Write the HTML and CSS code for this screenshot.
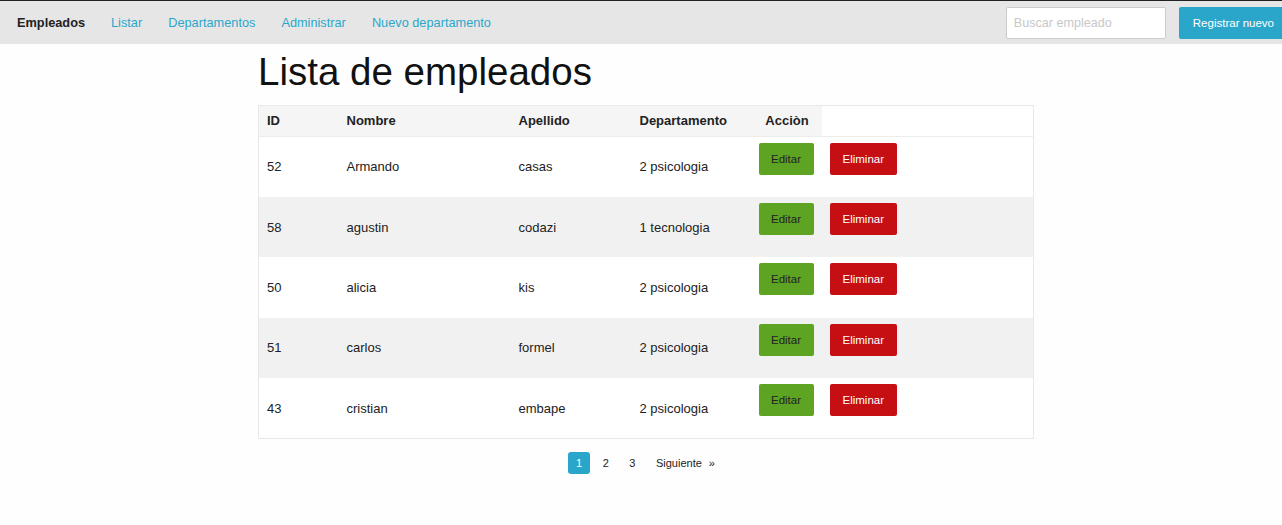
FILE: index.html
```html
<!DOCTYPE html>
<html lang="es">
<head>
<meta charset="utf-8">
<title>Lista de empleados</title>
<link rel="stylesheet" href="styles.css">
</head>
<body>
<nav class="topbar">
  <div class="nav-left">
    <a class="brand" href="#">Empleados</a>
    <a class="nav-link" href="#">Listar</a>
    <a class="nav-link" href="#">Departamentos</a>
    <a class="nav-link" href="#">Administrar</a>
    <a class="nav-link" href="#">Nuevo departamento</a>
  </div>
  <div class="nav-right">
    <input class="search" type="text" placeholder="Buscar empleado">
    <a class="btn-register" href="#">Registrar nuevo</a>
  </div>
</nav>
<main class="content">
  <h1 class="title">Lista de empleados</h1>
  <table class="emp-table">
    <colgroup>
      <col class="c-id"><col class="c-nombre"><col class="c-apellido"><col class="c-depto"><col class="c-accion"><col class="c-extra">
    </colgroup>
    <thead>
      <tr>
        <th>ID</th><th>Nombre</th><th>Apellido</th><th>Departamento</th><th class="th-center">Acciòn</th><td class="th-empty"></td>
      </tr>
    </thead>
    <tbody>
      <tr>
        <td>52</td><td>Armando</td><td>casas</td><td>2 psicologia</td>
        <td class="act"><a class="btn btn-edit" href="#">Editar</a></td>
        <td class="act"><a class="btn btn-del" href="#">Eliminar</a></td>
      </tr>
      <tr class="alt">
        <td>58</td><td>agustin</td><td>codazi</td><td>1 tecnologia</td>
        <td class="act"><a class="btn btn-edit" href="#">Editar</a></td>
        <td class="act"><a class="btn btn-del" href="#">Eliminar</a></td>
      </tr>
      <tr>
        <td>50</td><td>alicia</td><td>kis</td><td>2 psicologia</td>
        <td class="act"><a class="btn btn-edit" href="#">Editar</a></td>
        <td class="act"><a class="btn btn-del" href="#">Eliminar</a></td>
      </tr>
      <tr class="alt">
        <td>51</td><td>carlos</td><td>formel</td><td>2 psicologia</td>
        <td class="act"><a class="btn btn-edit" href="#">Editar</a></td>
        <td class="act"><a class="btn btn-del" href="#">Eliminar</a></td>
      </tr>
      <tr>
        <td>43</td><td>cristian</td><td>embape</td><td>2 psicologia</td>
        <td class="act"><a class="btn btn-edit" href="#">Editar</a></td>
        <td class="act"><a class="btn btn-del" href="#">Eliminar</a></td>
      </tr>
    </tbody>
  </table>
</main>
<ul class="pagination">
  <li><a class="page current" href="#">1</a></li>
  <li><a class="page" href="#">2</a></li>
  <li><a class="page" href="#">3</a></li>
  <li><a class="page" href="#">Siguiente<span class="raquo">»</span></a></li>
</ul>
</body>
</html>
```
FILE: styles.css
```css
html, body {
  margin: 0;
  padding: 0;
  background: #fefefe;
  overflow-x: hidden;
}
body {
  font-family: "Liberation Sans", Arial, sans-serif;
  color: #222;
  font-size: 13px;
}
a { text-decoration: none; }

.topbar {
  display: flex;
  align-items: center;
  justify-content: space-between;
  height: 43px;
  border-top: 1px solid #222;
  background: #e6e6e6;
  overflow: hidden;
}
.nav-left {
  display: flex;
  align-items: center;
  gap: 26px;
  padding-left: 17px;
}
.brand {
  font-weight: bold;
  color: #222;
  font-size: 12.75px;
}
.nav-link {
  color: #2ba6cb;
  font-size: 12.75px;
}
.nav-right {
  display: flex;
  align-items: center;
  gap: 13px;
  margin-right: -6px;
}
.search {
  box-sizing: border-box;
  width: 160px;
  height: 32px;
  border: 1px solid #cccccc;
  border-radius: 2px;
  background: #fff;
  padding: 0 7px;
  font-family: "Liberation Sans", Arial, sans-serif;
  font-size: 12.6px;
  color: #222;
  outline: none;
}
.search::placeholder { color: #c8c8c8; }
.btn-register {
  display: flex;
  align-items: center;
  height: 32px;
  padding: 0 14px;
  background: #2ba6cb;
  color: #fff;
  font-size: 11.5px;
  border-radius: 2px;
  white-space: nowrap;
}

.content {
  margin-left: 258px;
  width: 775px;
}
.title {
  margin: 6px 0 11px;
  font-size: 38.5px;
  line-height: 44px;
  font-weight: normal;
  color: #111;
}

.emp-table {
  width: 775px;
  table-layout: fixed;
  border-collapse: collapse;
  border: 1px solid #e8e8e8;
  background: #fff;
}
.c-id { width: 80px; }
.c-nombre { width: 172px; }
.c-apellido { width: 121px; }
.c-depto { width: 119px; }
.c-accion { width: 71px; }
.c-extra { width: 212px; }

.emp-table thead tr {
  height: 31px;
  border-bottom: 1px solid #ececec;
}
.emp-table th {
  background: #f5f5f5;
  text-align: left;
  font-weight: bold;
  font-size: 13px;
  padding: 0 8px 1px;
  color: #222;
}
.emp-table th.th-center { text-align: center; padding-left: 9px; padding-right: 7px; }
.th-empty { background: #fff; }

.emp-table tbody tr { height: 60.4px; }
.emp-table tbody tr.alt { background: #f1f1f1; }
.emp-table td {
  padding: 0 8px;
  font-size: 13px;
  vertical-align: middle;
  color: #222;
}
.emp-table td.act {
  vertical-align: top;
  padding-top: 6px;
}
.btn {
  display: inline-flex;
  align-items: center;
  justify-content: center;
  height: 32px;
  padding: 0 12.5px;
  font-size: 11.5px;
  border-radius: 2px;
}
.btn-edit {
  background: #5da423;
  color: #222;
}
.btn-del {
  background: #c60f13;
  color: #fff;
  padding: 0 13px;
}

.pagination {
  list-style: none;
  margin: 13px 0 0;
  padding: 0 0 0 9px;
  display: flex;
  justify-content: center;
  gap: 4.5px;
}
.page {
  display: block;
  height: 22px;
  line-height: 22px;
  padding: 0 8px;
  font-size: 11px;
  color: #222;
  border-radius: 3px;
}
.page.current {
  background: #2ba6cb;
  color: #fff;
}
.raquo { margin-left: 7px; }
```
